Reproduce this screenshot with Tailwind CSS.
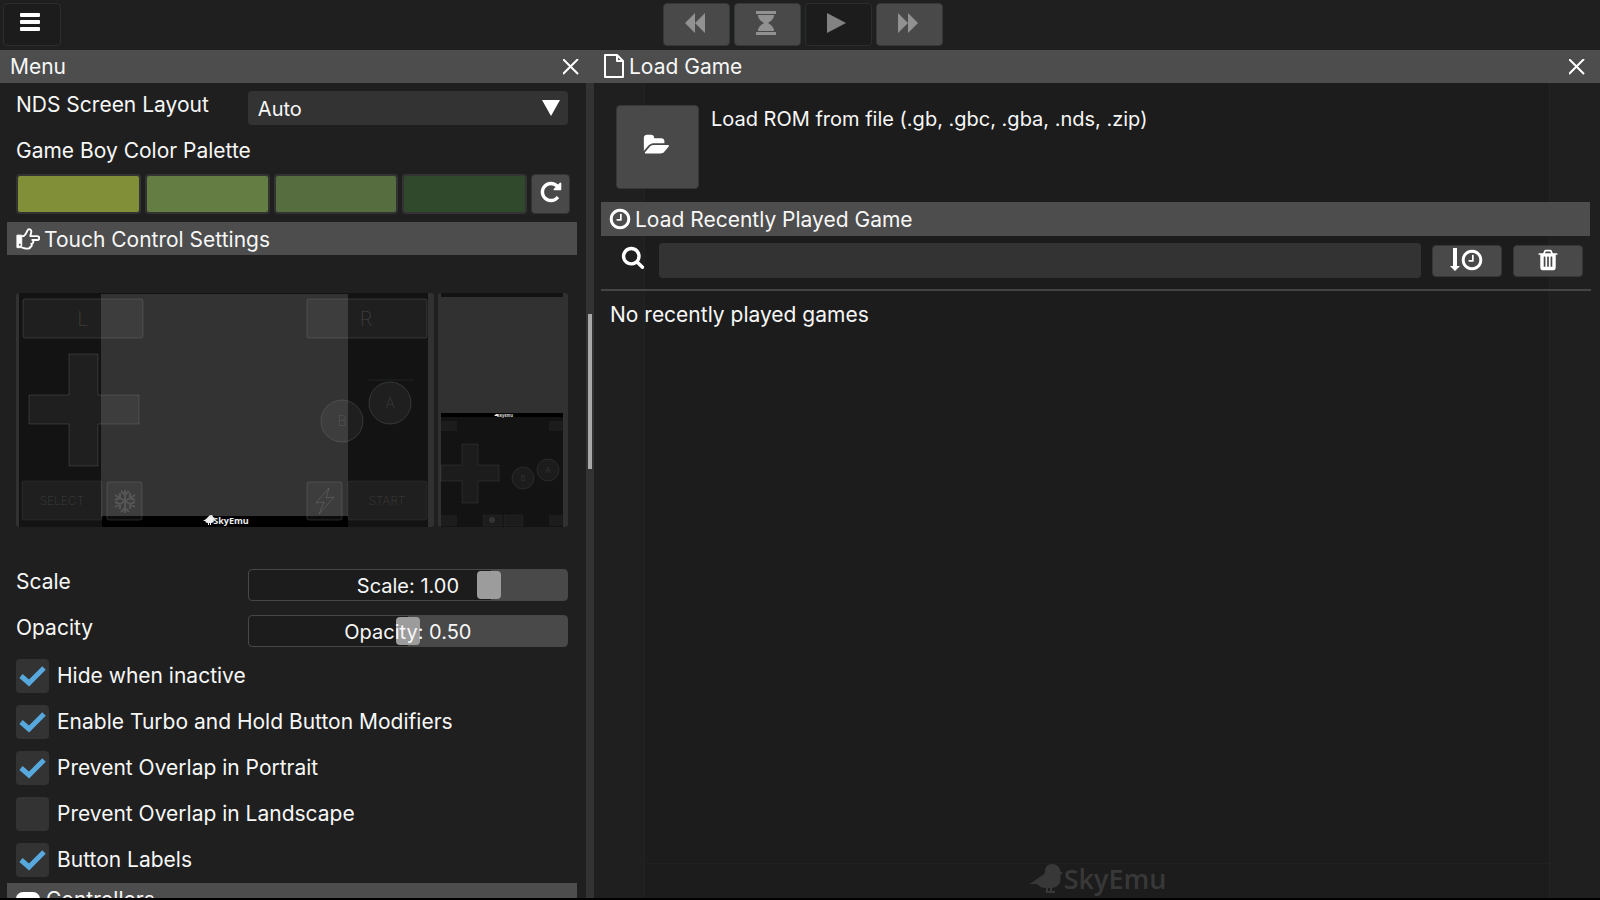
<!DOCTYPE html>
<html lang="en">
<head>
    <meta charset="UTF-8">
    <meta name="viewport" content="width=device-width, initial-scale=1.0">
    <title>SkyEmu</title>
    <script src="https://cdn.jsdelivr.net/npm/@tailwindcss/browser@4"></script>
</head>
<body class="h-screen flex flex-col overflow-hidden bg-[#1f1f1f] border-b-2 border-black font-['Inter','Noto_Sans',sans-serif] text-[21px] leading-6 text-[#f7f7f7]">

    <!-- Toolbar -->
    <header class="relative flex justify-center shrink-0 h-[50px] py-[3px]">
        <button aria-label="Menu" class="absolute left-[3px] w-[58px] h-[43px] rounded border border-[#2b2f2b] bg-[#1c1c1c] flex items-center pl-4 pb-[6px]">
            <svg class="w-5 h-5 fill-white" viewBox="0 0 20 20"><rect y="1" width="20" height="4" rx="1"/><rect y="8" width="20" height="4" rx="1"/><rect y="15" width="20" height="4" rx="1"/></svg>
        </button>
        <div class="flex gap-1 pl-[6px]">
            <button aria-label="Rewind" class="w-[67px] h-[43px] rounded border border-[#353935] bg-[#494949] flex items-center justify-center pb-1 pr-1">
                <svg class="w-6 h-6 fill-[#919191]" viewBox="0 0 24 24"><path d="M12 2v20L2 12zM22 2v20L12 12z"/></svg>
            </button>
            <button aria-label="Slow" class="w-[67px] h-[43px] rounded border border-[#353935] bg-[#494949] flex items-center justify-center pb-1 pr-1">
                <svg class="w-6 h-6 fill-[#919191]" viewBox="0 0 24 24"><path d="M2 0h20v3H2zM2 21h20v3H2zM4 4h16c0 4-3 6-6 8 3 2 6 4 6 8H4c0-4 3-6 6-8-3-2-6-4-6-8z"/></svg>
            </button>
            <button aria-label="Play" class="w-[67px] h-[43px] rounded border border-[#2b2f2b] bg-[#1c1c1c] flex items-center justify-center pb-1 pr-1">
                <svg class="w-6 h-6 fill-[#828282]" viewBox="0 0 24 24"><path d="M2 2l19 10L2 22z"/></svg>
            </button>
            <button aria-label="Fast forward" class="w-[67px] h-[43px] rounded border border-[#353935] bg-[#494949] flex items-center justify-center pb-1 pr-1">
                <svg class="w-6 h-6 fill-[#919191]" viewBox="0 0 24 24"><path d="M2 2l10 10L2 22zM12 2l10 10-10 10z"/></svg>
            </button>
        </div>
    </header>

    <main class="grid grid-cols-[594fr_1006fr] grow min-h-0">

        <!-- Menu panel -->
        <section class="flex flex-col min-h-0 min-w-0">
            <div class="flex items-center justify-between shrink-0 h-[33px] bg-[#4d4d4d] pl-[10px] pr-[15px]">
                <h2>Menu</h2>
                <button aria-label="Close menu"><svg class="w-4 h-4 stroke-white stroke-2" viewBox="0 0 16 16"><path d="M0 0l15 15M15 0L0 15"/></svg></button>
            </div>
            <div class="flex grow min-h-0">
                <div class="grow min-w-0 overflow-hidden pl-[7px] pr-[9px]">
                    <div class="pl-[9px] pr-[9px] pt-2">
                        <div class="grid grid-cols-[42fr_58fr]">
                            <label for="layout" class="pt-[2px]">NDS Screen Layout</label>
                            <div class="relative">
                                <select id="layout" class="block w-full h-[34px] appearance-none rounded-sm bg-[#333] pt-[2px] pl-[10px] text-[20px]"><option>Auto</option></select>
                                <svg class="absolute right-2 top-2 w-[18px] h-[18px] fill-white pointer-events-none" viewBox="0 0 18 18"><path d="M0 1h18L9 17z"/></svg>
                            </div>
                        </div>
                        <h3 class="mt-[14px]">Game Boy Color Palette</h3>
                        <div class="flex gap-1 mt-[11px] -mr-[2px]">
                            <button aria-label="Color 1" class="grow h-10 rounded border-2 border-[#333] bg-[#818f38]"></button>
                            <button aria-label="Color 2" class="grow h-10 rounded border-2 border-[#333] bg-[#647d43]"></button>
                            <button aria-label="Color 3" class="grow h-10 rounded border-2 border-[#333] bg-[#566d3f]"></button>
                            <button aria-label="Color 4" class="grow h-10 rounded border-2 border-[#333] bg-[#30492c]"></button>
                            <button aria-label="Reset palette" class="w-[39px] h-10 rounded border border-[#333] bg-[#494949] flex items-center justify-center pb-1">
                                <svg class="w-6 h-6 fill-white" viewBox="0 0 1792 1792"><path d="M1664 256v448q0 26-19 45t-45 19h-448q-42 0-59-40-17-39 14-69l138-138q-148-137-349-137-104 0-198.500 40.500t-163.500 109.500-109.500 163.500-40.500 198.500 40.500 198.500 109.500 163.500 163.500 109.500 198.500 40.500q119 0 225-52t179-147q7-10 23-12 15 0 25 9l137 138q9 8 9.500 20.500t-7.500 22.500q-109 132-264 204.500t-327 72.500q-156 0-298-61t-245-164-164-245-61-298 61-298 164-245 245-164 298-61q147 0 284.500 55.500t244.500 156.500l130-129q29-31 70-14 39 17 39 59z"/></svg>
                            </button>
                        </div>
                    </div>

                    <!-- Touch controls -->
                    <div class="flex items-center gap-1 mt-2 h-[33px] bg-[#4d4d4d] pl-2">
                        <svg class="w-[25px] h-6 fill-none stroke-white stroke-2" viewBox="0 0 26 24" stroke-linejoin="round"><path d="M7 9h2c2-1 3-4 4-6 1-2 4-1 4 1 0 2-1 3-1 5h7c3 0 3 4 0 4h-5c2 1 1 4-1 4 1 2 0 3-1 3 0 2-2 2-4 2-2 0-3-1-5-1H7"/><path class="fill-white" stroke-width="1" d="M2 8h5v13H2z"/><circle cx="5" cy="18" r="1" fill="#4d4d4d" stroke="none"/></svg>
                        <h2 class="pt-[2px]">Touch Control Settings</h2>
                    </div>
                    <div class="px-[9px] pt-[38px]">
                        <svg class="block w-full" viewBox="0 0 552 234" font-family="Inter, sans-serif" font-weight="200" text-anchor="middle">
                            <!-- landscape -->
                            <rect width="418" height="234" rx="3" fill="#313131"/>
                            <rect x="3" width="409" height="234" fill="#131313"/>
                            <rect x="85" y="1" width="247" height="223" fill="#333"/>
                            <rect x="86" y="223" width="246" height="11" fill="#000"/>
                            <g fill="#fff" fill-opacity=".05" stroke="#8fa39a" stroke-opacity=".22">
                                <rect x="7" y="6" width="120" height="39" rx="2"/>
                                <rect x="291" y="6" width="120" height="39" rx="2"/>
                                <path d="M53 61h29v41h41v29H82v42H53v-42H13v-29h40z"/>
                                <circle cx="326" cy="128" r="21"/>
                                <circle cx="374" cy="110" r="21"/>
                                <rect x="6" y="188" width="80" height="39" rx="2" stroke-opacity=".1"/>
                                <rect x="91" y="189" width="35" height="38" rx="2"/>
                                <rect x="291" y="189" width="35" height="38" rx="2"/>
                                <rect x="332" y="188" width="79" height="39" rx="2" stroke-opacity=".1"/>
                                <path d="M352 87h46" stroke-opacity=".12"/>
                            </g>
                            <g fill="#fff" fill-opacity=".14">
                                <text x="67" y="33" font-size="20">L</text>
                                <text x="350" y="33" font-size="20">R</text>
                                <text x="374" y="115" font-size="14">A</text>
                                <text x="326" y="133" font-size="14">B</text>
                                <text x="46" y="212" font-size="12">SELECT</text>
                                <text x="371" y="212" font-size="12">START</text>
                            </g>
                            <g fill="none" stroke="#fff" stroke-opacity=".13" stroke-width="2">
                                <path d="M109 197v23M99 202l20 12M99 214l20-12M105 198l4 4 4-4M105 219l4-4 4 4M99 207l5-2v-5M119 209l-5 2v5M99 209l5 2v5M119 207l-5-2v-5"/>
                                <path stroke-width="1" d="M313 195l-13 15 8-1-5 12 15-17-8 1z"/>
                            </g>
                            <g fill="#eee">
                                <path d="M187 228l3-2 3-3c2-2 4-1 4 1l2 1-1 1c0 3-1 4-3 4v2h-1v-2h-1v2h-1v-2c-2 0-2-1-3-2z"/>
                                <text x="215" y="231" font-size="9" font-weight="700" font-family="Open Sans, sans-serif">SkyEmu</text>
                            </g>
                            <!-- portrait -->
                            <rect x="422" width="130" height="234" rx="3" fill="#313131"/>
                            <rect x="425" width="122" height="4" fill="#131313"/>
                            <rect x="425" y="121" width="122" height="113" fill="#131313"/>
                            <rect x="425" y="120" width="122" height="4" fill="#000"/>
                            <path fill="#eee" d="M478 123l2-2h2v2z"/>
                            <text x="489" y="124" font-size="4" font-weight="700" fill="#ddd">SkyEmu</text>
                            <g fill="#fff" fill-opacity=".04" stroke="#a3a38f" stroke-opacity=".13">
                                <path d="M446 151h16v21h21v16h-21v22h-16v-22h-21v-16h21z"/>
                                <circle cx="507" cy="185" r="11"/>
                                <circle cx="532" cy="177" r="11"/>
                                <rect x="467" y="222" width="19" height="11" stroke-opacity=".06"/>
                                <rect x="488" y="222" width="19" height="11" stroke-opacity=".06"/>
                                <path stroke="none" d="M425 128h16v10h-16zM533 128h14v10h-14zM425 222h16v11h-16zM533 222h14v11h-14z"/>
                            </g>
                            <g fill="#fff" fill-opacity=".1" font-size="8" font-weight="400">
                                <text x="507" y="188">B</text>
                                <text x="532" y="180">A</text>
                                <circle cx="476" cy="227" r="3"/>
                            </g>
                        </svg>
                        <div class="grid grid-cols-[42fr_58fr] gap-y-[14px] mt-[42px]">
                            <label for="scale" class="pt-px">Scale</label>
                            <div class="relative">
                                <input id="scale" type="range" min="0.3" max="1.2" step="0.01" value="1" class="block w-full h-8 px-px appearance-none rounded-sm border border-[#454a45] bg-[linear-gradient(to_right,#1c1c1c_76%,#494949_76%)] [&::-webkit-slider-thumb]:appearance-none [&::-webkit-slider-thumb]:w-6 [&::-webkit-slider-thumb]:h-[28px] [&::-webkit-slider-thumb]:rounded [&::-webkit-slider-thumb]:bg-[#9c9c9c]">
                                <span class="absolute inset-0 flex items-center justify-center pt-[2px] text-[20px] pointer-events-none">Scale: 1.00</span>
                            </div>
                            <label for="opacity" class="pt-px">Opacity</label>
                            <div class="relative">
                                <input id="opacity" type="range" min="0" max="1" step="0.01" value="0.5" class="block w-full h-8 px-px appearance-none rounded-sm border border-[#454a45] bg-[linear-gradient(to_right,#1c1c1c_50%,#494949_50%)] [&::-webkit-slider-thumb]:appearance-none [&::-webkit-slider-thumb]:w-6 [&::-webkit-slider-thumb]:h-[28px] [&::-webkit-slider-thumb]:rounded [&::-webkit-slider-thumb]:bg-[#9c9c9c]">
                                <span class="absolute inset-0 flex items-center justify-center pt-[2px] text-[20px] pointer-events-none">Opacity: 0.50</span>
                            </div>
                        </div>
                        <div class="flex flex-col gap-3 mt-3">
                            <label class="relative flex items-center gap-2">
                                <input type="checkbox" checked class="peer appearance-none w-[33px] h-[34px] rounded-sm bg-[#333]">
                                <svg class="absolute left-[3px] top-[5px] w-[27px] h-6 fill-none stroke-[#57a8dc] stroke-5 invisible peer-checked:visible" viewBox="0 0 27 24"><path d="M2 12l8 7L25 4"/></svg>
                                Hide when inactive
                            </label>
                            <label class="relative flex items-center gap-2">
                                <input type="checkbox" checked class="peer appearance-none w-[33px] h-[34px] rounded-sm bg-[#333]">
                                <svg class="absolute left-[3px] top-[5px] w-[27px] h-6 fill-none stroke-[#57a8dc] stroke-5 invisible peer-checked:visible" viewBox="0 0 27 24"><path d="M2 12l8 7L25 4"/></svg>
                                Enable Turbo and Hold Button Modifiers
                            </label>
                            <label class="relative flex items-center gap-2">
                                <input type="checkbox" checked class="peer appearance-none w-[33px] h-[34px] rounded-sm bg-[#333]">
                                <svg class="absolute left-[3px] top-[5px] w-[27px] h-6 fill-none stroke-[#57a8dc] stroke-5 invisible peer-checked:visible" viewBox="0 0 27 24"><path d="M2 12l8 7L25 4"/></svg>
                                Prevent Overlap in Portrait
                            </label>
                            <label class="relative flex items-center gap-2">
                                <input type="checkbox" class="peer appearance-none w-[33px] h-[34px] rounded-sm bg-[#333]">
                                <svg class="absolute left-[3px] top-[5px] w-[27px] h-6 fill-none stroke-[#57a8dc] stroke-5 invisible peer-checked:visible" viewBox="0 0 27 24"><path d="M2 12l8 7L25 4"/></svg>
                                Prevent Overlap in Landscape
                            </label>
                            <label class="relative flex items-center gap-2">
                                <input type="checkbox" checked class="peer appearance-none w-[33px] h-[34px] rounded-sm bg-[#333]">
                                <svg class="absolute left-[3px] top-[5px] w-[27px] h-6 fill-none stroke-[#57a8dc] stroke-5 invisible peer-checked:visible" viewBox="0 0 27 24"><path d="M2 12l8 7L25 4"/></svg>
                                Button Labels
                            </label>
                        </div>
                    </div>

                    <!-- Controllers -->
                    <div class="flex items-center gap-[6px] mt-[6px] h-[33px] bg-[#4d4d4d] pl-[9px]">
                        <svg class="w-6 h-4 fill-white" viewBox="0 0 24 16"><rect width="24" height="16" rx="7"/></svg>
                        <h2>Controllers</h2>
                    </div>
                </div>
                <!-- Scrollbar -->
                <div class="w-2 shrink-0 bg-[#333] px-[2px] pt-[231px]">
                    <div class="h-[155px] bg-[#a8a8a8]"></div>
                </div>
            </div>
        </section>

        <!-- Load game panel -->
        <section class="flex flex-col min-h-0 min-w-0">
            <div class="flex items-center shrink-0 h-[33px] bg-[#4d4d4d] pl-[10px] pr-[15px]">
                <svg class="w-5 h-6 mr-[5px] mb-[2px] fill-none stroke-white stroke-2" viewBox="0 0 20 24"><path d="M1 1h12l6 6v16H1zM13 1v6h6" stroke-linejoin="round"/></svg>
                <h2>Load Game</h2>
                <button aria-label="Close load game" class="ml-auto"><svg class="w-4 h-4 stroke-white stroke-2" viewBox="0 0 16 16"><path d="M0 0l15 15M15 0L0 15"/></svg></button>
            </div>
            <div class="relative grow flex flex-col min-h-0 pl-[7px] pr-[9px]">
                <!-- Dimmed game screen behind the panel -->
                <div class="absolute inset-y-0 left-[5%] right-[5%] -z-10 flex flex-col justify-end border-x border-[#222] bg-[#1c1c1c]">
                    <div class="flex items-center justify-center border-t border-[#202020] h-[35px] pb-1 text-[27px] font-semibold font-['Open_Sans','Noto_Sans',sans-serif] text-[#383838]">
                        <svg class="w-9 h-[30px] fill-[#383838]" viewBox="0 0 36 30"><path d="M1 20c4-1 8-6 14-9 1-1 2-2 2-4 0-4 3-7 7-7 5 0 8 3 8 7l3 2-3 2c2 7-1 12-8 13v3h3v2h-5v-5h-2v3h3v2h-5v-5c-4 0-6-1-9-4z"/></svg>
                        SkyEmu
                    </div>
                </div>

                <div class="flex gap-3 pl-[15px] pt-[22px]">
                    <button aria-label="Open file" class="w-[83px] h-[84px] rounded border border-[#353935] bg-[#494949] flex items-center justify-center pb-1 pr-1">
                        <svg class="w-[26px] h-6 fill-white" viewBox="0 0 1944 1792"><path d="M1943 952q0 31-31 66l-336 396q-43 51-120.500 86.500t-143.500 35.500h-1088q-34 0-60.500-13t-26.500-43q0-31 31-66l336-396q43-51 120.500-86.500t143.500-35.500h1088q34 0 60.500 13t26.500 43zm-343-344v160h-832q-94 0-197 47.500t-164 119.500l-337 396-5 6q0-4-.5-12.500t-.5-12.500v-960q0-92 66-158t158-66h320q92 0 158 66t66 158v32h544q92 0 158 66t66 158z"/></svg>
                    </button>
                    <p class="pt-[2px] text-[20px]">Load ROM from file (.gb, .gbc, .gba, .nds, .zip)</p>
                </div>

                <div class="flex items-center gap-[3px] mt-[13px] h-[34px] bg-[#4d4d4d] pl-[7px] mr-px">
                    <svg class="w-6 h-6 fill-white" viewBox="0 0 1792 1792"><path d="M1024 544v448q0 14-9 23t-23 9h-320q-14 0-23-9t-9-23v-64q0-14 9-23t23-9h224v-352q0-14 9-23t23-9h64q14 0 23 9t9 23zm416 352q0-148-73-273t-198-198-273-73-273 73-198 198-73 273 73 273 198 198 273 73 273-73 198-198 73-273zm224 0q0 209-103 385.500t-279.500 279.500-385.500 103-385.500-103-279.500-279.500-103-385.500 103-385.500 279.500-279.500 385.500-103 385.500 103 279.500 279.500 103 385.500z"/></svg>
                    <h2 class="pt-[2px]">Load Recently Played Game</h2>
                </div>

                <div class="flex items-center pl-5 pr-2 mt-[7px]">
                    <label for="search" class="mr-[14px]"><svg class="w-6 h-6 mb-2 fill-white" viewBox="0 0 1792 1792"><title>Search</title><path d="M1216 832q0-185-131.500-316.500t-316.500-131.500-316.500 131.500-131.500 316.500 131.500 316.500 316.500 131.500 316.500-131.500 131.500-316.500zm512 832q0 52-38 90t-90 38q-54 0-90-38l-343-342q-179 124-399 124-143 0-273.500-55.500t-225-150-150-225-55.500-273.500 55.500-273.500 150-225 225-150 273.500-55.500 273.500 55.500 225 150 150 225 55.500 273.500q0 220-124 399l343 343q37 37 37 90z"/></svg></label>
                    <input id="search" type="text" class="grow h-[35px] rounded-sm bg-[#333] px-2">
                    <button aria-label="Sort by time" class="ml-[11px] w-[70px] h-8 rounded border border-[#353935] bg-[#494949] flex items-center justify-center pb-[2px]">
                        <svg class="w-[10px] h-6 fill-white" viewBox="0 0 10 24"><path d="M3 0h4v18h3l-5 5-5-5h3z"/></svg>
                        <svg class="w-6 h-6 fill-white" viewBox="0 0 1792 1792"><path d="M1024 544v448q0 14-9 23t-23 9h-320q-14 0-23-9t-9-23v-64q0-14 9-23t23-9h224v-352q0-14 9-23t23-9h64q14 0 23 9t9 23zm416 352q0-148-73-273t-198-198-273-73-273 73-198 198-73 273 73 273 198 198 273 73 273-73 198-198 73-273zm224 0q0 209-103 385.500t-279.500 279.500-385.500 103-385.500-103-279.500-279.500-103-385.500 103-385.500 279.500-279.500 385.500-103 385.500 103 279.500 279.500 103 385.500z"/></svg>
                    </button>
                    <button aria-label="Clear recent games" class="ml-[11px] w-[70px] h-8 rounded border border-[#353935] bg-[#494949] flex items-center justify-center pb-[2px]">
                        <svg class="w-6 h-6 fill-white" viewBox="0 0 1792 1792"><path d="M704 1376v-704q0-14-9-23t-23-9h-64q-14 0-23 9t-9 23v704q0 14 9 23t23 9h64q14 0 23-9t9-23zm256 0v-704q0-14-9-23t-23-9h-64q-14 0-23 9t-9 23v704q0 14 9 23t23 9h64q14 0 23-9t9-23zm256 0v-704q0-14-9-23t-23-9h-64q-14 0-23 9t-9 23v704q0 14 9 23t23 9h64q14 0 23-9t9-23zm-544-992h448l-48-117q-7-9-17-11h-317q-10 2-17 11zm928 32v64q0 14-9 23t-23 9h-96v948q0 83-47 143.500t-113 60.500h-832q-66 0-113-58.500t-47-141.500v-952h-96q-14 0-23-9t-9-23v-64q0-14 9-23t23-9h309l70-167q15-37 54-63t79-26h320q40 0 79 26t54 63l70 167h309q14 0 23 9t9 23z"/></svg>
                    </button>
                </div>
                <hr class="mt-[11px] border-t-2 border-[#454545]">
                <p class="pl-[9px] mt-3">No recently played games</p>
            </div>
        </section>
    </main>
</body>
</html>
